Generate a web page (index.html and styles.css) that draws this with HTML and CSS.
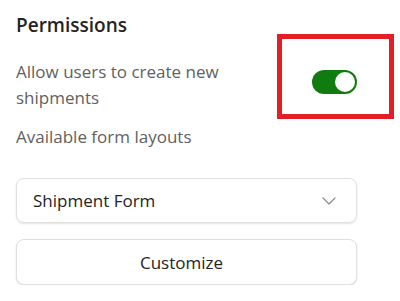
FILE: index.html
```html
<!DOCTYPE html>
<html lang="en">
<head>
    <meta charset="UTF-8">
    <meta name="viewport" content="width=device-width, initial-scale=1.0">
    <title>Permissions</title>
    <link rel="stylesheet" href="styles.css">
</head>
<body>

    <!-- PANNEAU PERMISSIONS -->
    <div class="panel">
        <h2 class="panelTitle">Permissions</h2>

        <div class="settingRow">
            <span class="settingLabel">Allow users to create new shipments</span>
            <div class="toggleWrap">
                <span class="toggle"><span class="toggleKnob"></span></span>
                <span class="highlight"></span>
            </div>
        </div>

        <p class="settingLabel layoutsLabel">Available form layouts</p>

        <div class="dropdown">
            <span>Shipment Form</span>
            <svg class="chevron" width="14" height="8" viewBox="0 0 14 8">
                <path d="M1 1 L7 7 L13 1" fill="none" stroke="#8a8a8a" stroke-width="1.2" stroke-linecap="round" stroke-linejoin="round"/>
            </svg>
        </div>

        <button class="customizeBtn" type="button">Customize</button>
    </div>
    <!-- FIN PANNEAU -->

</body>
</html>
```

FILE: styles.css
```css
body{
    margin:0;
    background-color:white;
    font-family:"Open Sans", "Noto Sans", sans-serif;
    color:#242424;
}

.panel{
    width:341px;
    padding:12px 0 0 16px;
    display:flex;
    flex-direction:column;
}

.panelTitle{
    margin:0;
    font-size:19px;
    font-weight:600;
    line-height:26px;
}

.settingRow{
    display:flex;
    align-items:flex-start;
    justify-content:space-between;
    margin-top:21px;
}

.settingLabel{
    width:240px;
    font-size:17px;
    line-height:26px;
    color:#616161;
}

.layoutsLabel{
    margin:13px 0 0 0;
}

.toggleWrap{
    position:relative;
    margin-top:11px;
}

.toggle{
    display:flex;
    align-items:center;
    justify-content:flex-end;
    box-sizing:border-box;
    width:45px;
    height:24px;
    padding:2px;
    border-radius:12px;
    background-color:#107c10;
}

.toggleKnob{
    width:20px;
    height:20px;
    border-radius:50%;
    background-color:white;
}

/* cadre rouge d'annotation autour du toggle */
.highlight{
    position:absolute;
    left:-35px;
    right:-37px;
    top:-36px;
    bottom:-25px;
    border:5px solid #e31e24;
}

.dropdown{
    display:flex;
    align-items:center;
    justify-content:space-between;
    height:45px;
    box-sizing:border-box;
    margin-top:28px;
    padding:0 20px 0 16px;
    border:1px solid #e0e0e0;
    border-radius:8px;
    box-shadow:0 1px 2px rgba(0,0,0,0.12);
    font-size:17px;
}

.customizeBtn{
    height:46px;
    margin-top:16px;
    padding:0 10px 0 0;
    border:1px solid #e0e0e0;
    border-radius:8px;
    background-color:white;
    box-shadow:0 1px 2px rgba(0,0,0,0.12);
    font-family:inherit;
    font-size:17px;
    color:#242424;
}
```
